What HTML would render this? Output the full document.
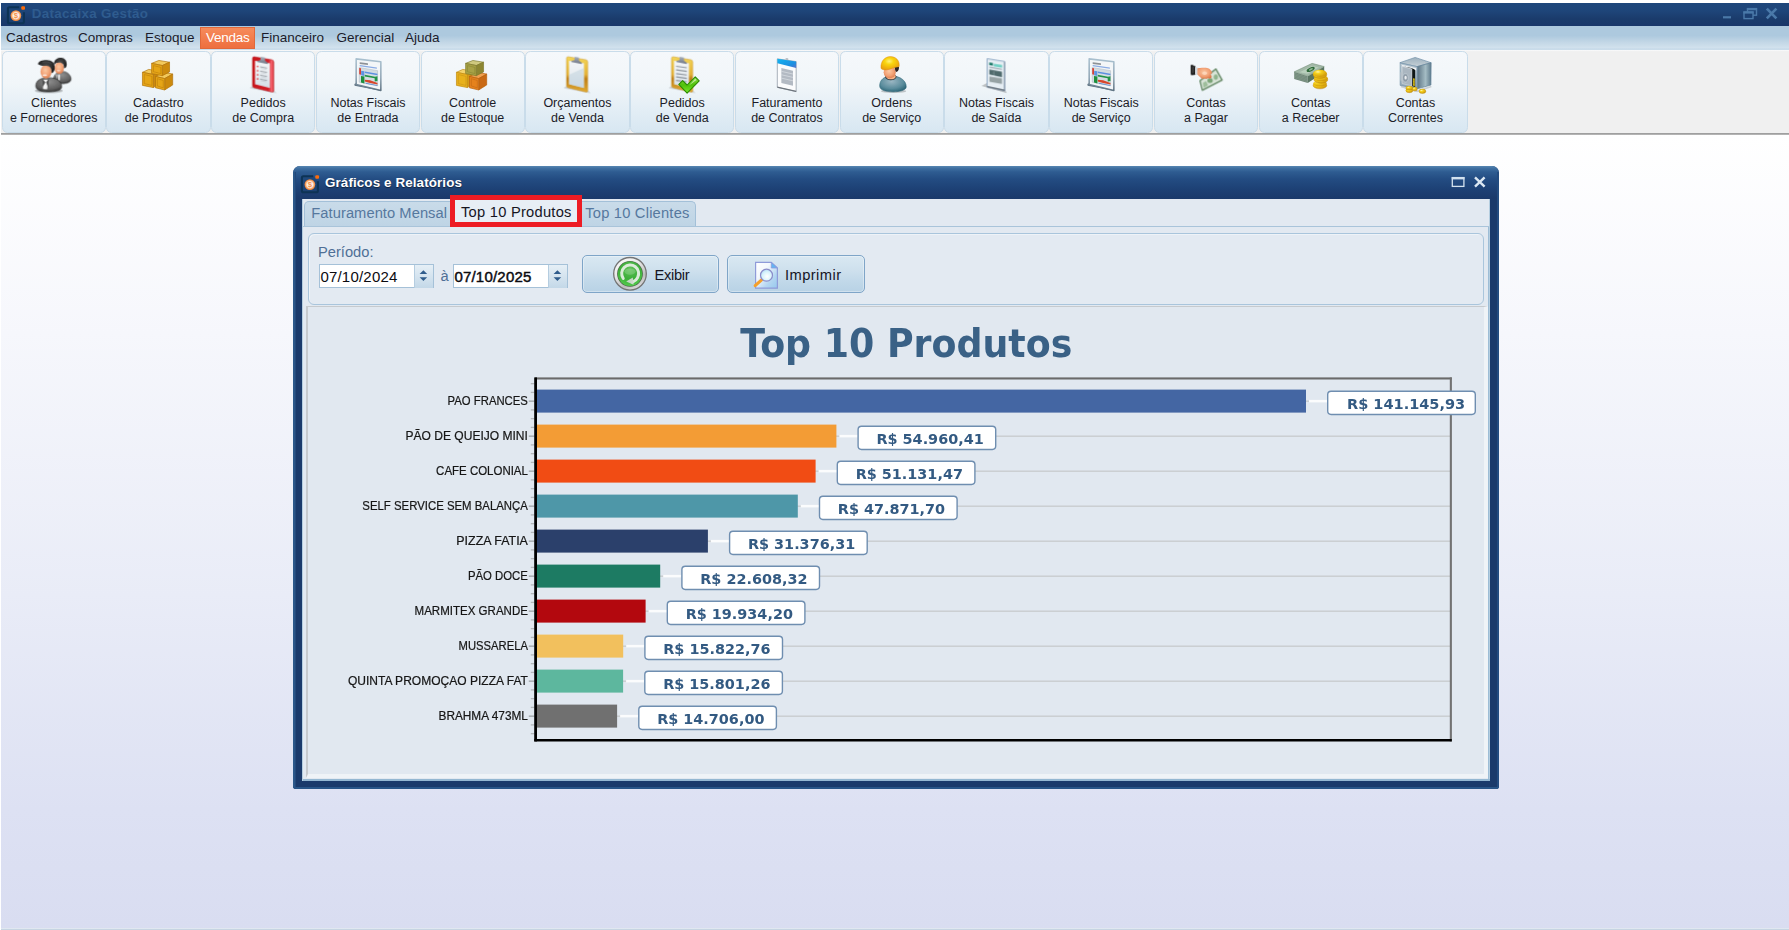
<!DOCTYPE html>
<html lang="pt-BR">
<head>
<meta charset="utf-8">
<title>Datacaixa Gestão</title>
<style>
*{box-sizing:border-box;margin:0;padding:0}
html,body{width:1789px;height:930px;overflow:hidden;background:#fff}
body{position:relative;font-family:"Liberation Sans",sans-serif;color:#1e1e1e}
.abs,.abs2 *{position:absolute}
.abs{position:absolute}
#desk{left:1px;top:135px;width:1788px;height:793px;background:linear-gradient(#ffffff 0%,#f6f7fc 25%,#e9ecf7 58%,#dde1f3 85%,#d9ddf1 100%)}
#deskline{left:1px;top:928px;width:1788px;height:2px;background:linear-gradient(#eef1f8,#b9cbdb)}
#title{left:1px;top:3px;width:1788px;height:23px;background:linear-gradient(#1f477b 0%,#1e4579 35%,#1a3b6b 70%,#19376A 100%)}
#title .cap{left:30.7px;top:3px;font-weight:bold;font-size:13.4px;letter-spacing:.3px;color:#2f5c8f;white-space:nowrap}
#menu{left:1px;top:26px;width:1788px;height:24px;background:linear-gradient(#adc9de 0%,#adc9de 40%,#c3d7e6 68%,#d1e1ed 90%,#c5d9e8 97%,#d4e3ee 100%)}
#menu span{position:absolute;top:4px;font-size:13.5px;color:#1b1b2a;white-space:nowrap}
#menu .v{letter-spacing:-.25px}
#menu .sel{position:absolute;left:199px;top:1px;width:55px;height:22px;background:linear-gradient(#f68b5b,#ee6f3f);border:1px solid #e0683a}
#tool{left:1px;top:50px;width:1788px;height:83px;background:linear-gradient(#fafbfc 0,#f0f0f0 1.6px)}
#toolline{left:1px;top:132.8px;width:1788px;height:2.4px;background:linear-gradient(#a6a6a6 0%,#9c9c9c 35%,#c2c2c2 100%)}
.tb{position:absolute;top:1px;height:82px;width:104.4px;border:1.5px solid #c9dcea;border-radius:5.5px;background:linear-gradient(#f5f8fb 0%,#f1f6f9 40%,#e2edf5 75%,#d8e7f2 100%)}
.tb .lb{position:absolute;left:0;right:0;top:43.6px;text-align:center;font-size:12.5px;line-height:15.4px;color:#1c1c28;white-space:nowrap}
.ic{position:absolute;top:52px;width:50px;height:45px;overflow:visible}
#win{left:293px;top:166px;width:1205.6px;height:623px;border-radius:7px 7px 3px 3px;background:#1a3a6b;overflow:hidden}
#wtitle{left:0;top:0;width:1206px;height:33px;background:linear-gradient(#5787b2 0%,#3f6fa1 7%,#2e5c91 18%,#234c82 40%,#1d4074 72%,#1a396a 100%)}
#wtitle .cap{left:32px;top:8.5px;font-weight:bold;font-size:13.4px;letter-spacing:.11px;color:#fff;white-space:nowrap;text-shadow:0 1px 1px rgba(0,0,0,.5)}
#wedge{left:0;top:6px;width:3.2px;height:617px;background:linear-gradient(90deg,#2c598b 0%,#2a5587 70%,#1a3a6b 100%)}
#wedgeb{left:0;bottom:0;width:1206px;height:2.5px;background:#285588}
#wedger{right:0;top:6px;width:2px;height:617px;background:#234c80}
#client{left:8.8px;top:33px;width:1188.4px;height:582.2px;background:#e2e9f1;border:1px solid #b5cee0;border-top:none}
.t14{font-size:14.1px;white-space:nowrap}
</style>
</head>
<body>

<svg width="0" height="0" style="position:absolute"><defs>
<filter id="bl" x="-10%" y="-10%" width="120%" height="120%"><feGaussianBlur stdDeviation="7"/></filter>
<filter id="bl2" x="-20%" y="-20%" width="140%" height="140%"><feGaussianBlur stdDeviation="14"/></filter>
<radialGradient id="skin" cx="45%" cy="40%" r="65%"><stop offset="0" stop-color="#fbc9a4"/><stop offset="0.6" stop-color="#f2a074"/><stop offset="1" stop-color="#d9794a"/></radialGradient>
<radialGradient id="suit" cx="50%" cy="30%" r="75%"><stop offset="0" stop-color="#8f8f8f"/><stop offset="0.7" stop-color="#5e5e5e"/><stop offset="1" stop-color="#2c2c2c"/></radialGradient>
<radialGradient id="hair" cx="50%" cy="40%" r="70%"><stop offset="0" stop-color="#4a4a4a"/><stop offset="1" stop-color="#121212"/></radialGradient>
<linearGradient id="gold1" x1="0" y1="0" x2="1" y2="1"><stop offset="0" stop-color="#e2a516"/><stop offset="0.6" stop-color="#efbb3c"/><stop offset="1" stop-color="#e0a010"/></linearGradient>
<linearGradient id="redb" x1="0" y1="0" x2="1" y2="0"><stop offset="0" stop-color="#c8161c"/><stop offset="0.75" stop-color="#d42029"/><stop offset="0.92" stop-color="#f76872"/><stop offset="1" stop-color="#c8161c"/></linearGradient>
<linearGradient id="yelb" x1="0" y1="0" x2="0" y2="1"><stop offset="0" stop-color="#f3d558"/><stop offset="0.5" stop-color="#e5b43a"/><stop offset="0.62" stop-color="#bf7f18"/><stop offset="1" stop-color="#e0aa32"/></linearGradient>
<linearGradient id="paper" x1="0" y1="0" x2="0" y2="1"><stop offset="0" stop-color="#f4f6f8"/><stop offset="0.5" stop-color="#e9eef2"/><stop offset="1" stop-color="#d3dfe7"/></linearGradient>
<linearGradient id="clip" x1="0" y1="0" x2="0" y2="1"><stop offset="0" stop-color="#a9b0bb"/><stop offset="1" stop-color="#6d7483"/></linearGradient>
<linearGradient id="chk" x1="0" y1="0" x2="0" y2="1"><stop offset="0" stop-color="#8fe04a"/><stop offset="0.5" stop-color="#4fc108"/><stop offset="1" stop-color="#7cea30"/></linearGradient>
<radialGradient id="helm" cx="45%" cy="35%" r="70%"><stop offset="0" stop-color="#fff27a"/><stop offset="0.35" stop-color="#f9d40c"/><stop offset="1" stop-color="#e89a0c"/></radialGradient>
<radialGradient id="teal" cx="45%" cy="35%" r="75%"><stop offset="0" stop-color="#9ab6c2"/><stop offset="0.6" stop-color="#5a8c9c"/><stop offset="1" stop-color="#1f5a6c"/></radialGradient>
<linearGradient id="bluetop" x1="0" y1="0" x2="1" y2="1"><stop offset="0" stop-color="#10b4f0"/><stop offset="0.7" stop-color="#1e8ee0"/><stop offset="1" stop-color="#5b6fc8"/></linearGradient>
<radialGradient id="coin" cx="35%" cy="30%" r="80%"><stop offset="0" stop-color="#fff6a8"/><stop offset="0.3" stop-color="#f6d21c"/><stop offset="1" stop-color="#c98f08"/></radialGradient>
<linearGradient id="sfr" x1="0" y1="0" x2="1" y2="0"><stop offset="0" stop-color="#5d7484"/><stop offset="0.6" stop-color="#a4bcc4"/><stop offset="1" stop-color="#5f7b8c"/></linearGradient>
<linearGradient id="sff" x1="0" y1="0" x2="0" y2="1"><stop offset="0" stop-color="#c4d0d8"/><stop offset="1" stop-color="#8ca2b2"/></linearGradient>
<linearGradient id="sft" x1="0" y1="0" x2="0" y2="1"><stop offset="0" stop-color="#9cb0be"/><stop offset="1" stop-color="#c6d0d6"/></linearGradient>
<linearGradient id="frm" x1="0" y1="0" x2="0" y2="1"><stop offset="0" stop-color="#a9c0cf"/><stop offset="0.6" stop-color="#8fa4b4"/><stop offset="1" stop-color="#5f7382"/></linearGradient>
</defs></svg>

<div id="desk" class="abs"></div><div id="deskline" class="abs"></div>
<div id="title" class="abs"><div class="cap abs">Datacaixa Gestão</div><svg class="abs" style="left:4.9px;top:1.6px" width="20" height="20" viewBox="0 0 20 20"><defs><radialGradient id="cn" cx="50%" cy="50%" r="50%"><stop offset="0" stop-color="#fff"/><stop offset=".55" stop-color="#fdeee2"/><stop offset=".8" stop-color="#f5a263"/><stop offset="1" stop-color="#ee7f30"/></radialGradient></defs><path d="M13.2,2.2 L3.4,2.2 Q1.9,2.2 1.9,3.7 L1.9,16.8 Q1.9,18.3 3.4,18.3 L16.4,18.3 Q17.9,18.3 17.9,16.8 L17.9,7.2" fill="#1d4674" fill-opacity=".55" stroke="#0d3355" stroke-width="2.1"/><circle cx="9.9" cy="10.6" r="5.35" fill="url(#cn)"/><text x="9.9" y="13.2" font-family="Liberation Sans,sans-serif" font-size="7.6" font-weight="bold" fill="#f4914a" text-anchor="middle">$</text><rect x="15.3" y="1.2" width="3.7" height="3.5" rx="1" fill="#fb6c0c"/></svg>
<svg class="abs" style="left:1715px;top:2px" width="70" height="20" viewBox="0 0 70 20"><rect x="7" y="11.2" width="8" height="2.2" fill="#4a79a9"/><rect x="31.5" y="3.6" width="9" height="6.6" fill="none" stroke="#4a79a9" stroke-width="1.4"/><rect x="30.9" y="3" width="10.2" height="2.2" fill="#4a79a9"/><rect x="28" y="7" width="9" height="6.6" fill="#1b3f72" stroke="#4a79a9" stroke-width="1.4"/><rect x="27.4" y="6.4" width="10.2" height="2.2" fill="#4a79a9"/><path d="M50.8,3.6 L60.4,13.4 M60.4,3.6 L50.8,13.4" stroke="#4a79a9" stroke-width="2.7"/></svg>
</div>
<div id="menu" class="abs"><div class="sel"></div><span style="left:5px">Cadastros</span><span style="left:77px">Compras</span><span style="left:144px">Estoque</span><span class="v" style="left:205px;color:#fff">Vendas</span><span style="left:260px">Financeiro</span><span style="left:335.5px">Gerencial</span><span style="left:404px">Ajuda</span></div>
<div id="tool" class="abs">
<div class="tb" style="left:0.50px"><div class="lb">Clientes<br>e Fornecedores</div></div>
<div class="tb" style="left:105.25px"><div class="lb">Cadastro<br>de Produtos</div></div>
<div class="tb" style="left:210.00px"><div class="lb">Pedidos<br>de Compra</div></div>
<div class="tb" style="left:314.75px"><div class="lb">Notas Fiscais<br>de Entrada</div></div>
<div class="tb" style="left:419.50px"><div class="lb">Controle<br>de Estoque</div></div>
<div class="tb" style="left:524.25px"><div class="lb">Orçamentos<br>de Venda</div></div>
<div class="tb" style="left:629.00px"><div class="lb">Pedidos<br>de Venda</div></div>
<div class="tb" style="left:733.75px"><div class="lb">Faturamento<br>de Contratos</div></div>
<div class="tb" style="left:838.50px"><div class="lb">Ordens<br>de Serviço</div></div>
<div class="tb" style="left:943.25px"><div class="lb">Notas Fiscais<br>de Saída</div></div>
<div class="tb" style="left:1048.00px"><div class="lb">Notas Fiscais<br>de Serviço</div></div>
<div class="tb" style="left:1152.75px"><div class="lb">Contas<br>a Pagar</div></div>
<div class="tb" style="left:1257.50px"><div class="lb">Contas<br>a Receber</div></div>
<div class="tb" style="left:1362.25px"><div class="lb">Contas<br>Correntes</div></div>
</div><div id="toolline" class="abs"></div>
<svg class="ic" style="left:28px" viewBox="0 0 1033 930"><g filter="url(#bl)">
<ellipse cx="430" cy="800" rx="290" ry="48" fill="#000" opacity="0.28" filter="url(#bl2)"/>
<path d="M520,600 C520,470 610,400 700,400 C800,400 890,470 890,560 C890,625 800,655 700,655 C600,655 520,640 520,600Z" fill="url(#suit)" stroke="#2a2a2a" stroke-width="10"/>
<path d="M620,470 L665,470 L655,590 L625,585Z" fill="#e8e8e8"/>
<path d="M560,450 L625,470 L600,560Z" fill="#bdbdbd" opacity=".8"/>
<ellipse cx="645" cy="330" rx="95" ry="122" fill="url(#skin)"/>
<ellipse cx="630" cy="385" rx="40" ry="16" fill="#fff" opacity=".55"/>
<path d="M535,250 C535,150 620,115 690,120 C770,125 815,200 795,290 C785,325 760,335 745,335 C745,260 720,215 640,215 C590,215 555,230 545,270Z" fill="url(#hair)"/>
<path d="M160,700 C160,590 250,530 420,530 C590,530 695,600 695,720 C695,795 560,820 420,820 C270,820 160,795 160,700Z" fill="url(#suit)" stroke="#222" stroke-width="12"/>
<path d="M305,575 L415,575 L395,770 L312,765Z" fill="#f6f6f6"/>
<path d="M295,555 L360,625 L305,720Z M430,555 L372,625 L415,730Z" fill="#2c2c2c" opacity="0.8"/>
<ellipse cx="372" cy="405" rx="115" ry="142" fill="url(#skin)"/>
<ellipse cx="345" cy="478" rx="48" ry="18" fill="#fff" opacity="0.75"/>
<path d="M205,245 C230,175 330,160 420,170 C525,180 565,260 550,355 C540,405 505,425 488,435 C490,340 460,290 380,285 C310,280 260,290 245,270 C225,265 210,260 205,245Z" fill="url(#hair)"/>
<path d="M300,215 C360,195 430,200 480,240" stroke="#6a6a6a" stroke-width="14" fill="none" opacity=".6"/>
</g></svg>
<svg class="ic" style="left:133px" viewBox="0 0 1033 930"><g filter="url(#bl)"><path d="M195,420 L325,360 L550,396.0 L420,465 Z" fill="#f2c95c" stroke="#b07208" stroke-width="14" stroke-linejoin="round"/><path d="M420,465 L550,396.0 L550,656.0 L420,735 Z" fill="#cc8a10" stroke="#b07208" stroke-width="14" stroke-linejoin="round"/><path d="M195,420 L420,465 L420,735 L195,690 Z" fill="#e5a516" stroke="#b07208" stroke-width="14" stroke-linejoin="round"/><path d="M233,466 L390,503 L390,691 L233,652 Z" fill="none" stroke="#b07208" stroke-opacity="0.7" stroke-width="13"/><path d="M465,505 L630,420 L820,456.0 L655,550 Z" fill="#f2c95c" stroke="#b07208" stroke-width="14" stroke-linejoin="round"/><path d="M655,550 L820,456.0 L820,681.0 L655,785 Z" fill="#cc8a10" stroke="#b07208" stroke-width="14" stroke-linejoin="round"/><path d="M465,505 L655,550 L655,785 L465,740 Z" fill="#e5a516" stroke="#b07208" stroke-width="14" stroke-linejoin="round"/><path d="M503,551 L625,588 L625,741 L503,702 Z" fill="none" stroke="#b07208" stroke-opacity="0.7" stroke-width="13"/><path d="M385,235 L535,175 L755,211.0 L605,280 Z" fill="#f2c95c" stroke="#b07208" stroke-width="14" stroke-linejoin="round"/><path d="M605,280 L755,211.0 L755,411.0 L605,490 Z" fill="#cc8a10" stroke="#b07208" stroke-width="14" stroke-linejoin="round"/><path d="M385,235 L605,280 L605,490 L385,445 Z" fill="#e5a516" stroke="#b07208" stroke-width="14" stroke-linejoin="round"/><path d="M423,281 L575,318 L575,446 L423,407 Z" fill="none" stroke="#b07208" stroke-opacity="0.7" stroke-width="13"/></g></svg>
<svg class="ic" style="left:238px" viewBox="0 0 1033 930"><g filter="url(#bl)">
<path d="M240,750 L300,700 L740,800 L800,850 Z" fill="#000" opacity="0.16" filter="url(#bl2)"/>
<path d="M300,130 Q300,95 335,98 L700,160 Q738,168 738,205 L738,800 Q738,835 700,828 L335,738 Q300,730 300,695 Z" fill="url(#redb)" stroke="#b20f14" stroke-width="10"/>
<path d="M352,180 L660,232 L660,745 L352,665 Z" fill="url(#paper)"/>
<circle cx="405" cy="300" r="17" fill="#e02a30"/><path d="M455,305 L600,332" stroke="#8a8f96" stroke-width="20" opacity="0.8"/><path d="M470,338 L590,360" stroke="#b4b9c0" stroke-width="14" opacity="0.7"/><circle cx="405" cy="388" r="17" fill="#e02a30"/><path d="M455,393 L600,420" stroke="#8a8f96" stroke-width="20" opacity="0.8"/><path d="M470,426 L590,448" stroke="#b4b9c0" stroke-width="14" opacity="0.7"/><circle cx="405" cy="472" r="17" fill="#e02a30"/><path d="M455,477 L600,504" stroke="#8a8f96" stroke-width="20" opacity="0.8"/><path d="M470,510 L590,532" stroke="#b4b9c0" stroke-width="14" opacity="0.7"/><circle cx="405" cy="555" r="17" fill="#e02a30"/><path d="M455,560 L600,587" stroke="#8a8f96" stroke-width="20" opacity="0.8"/><path d="M470,593 L590,615" stroke="#b4b9c0" stroke-width="14" opacity="0.7"/>
<path d="M470,100 L555,112 L560,180 L620,225 L615,245 L400,205 L400,185 L465,165 Z" fill="url(#clip)"/>
</g></svg>
<svg class="ic" style="left:343px" viewBox="0 0 1033 930"><g filter="url(#bl)">
<path d="M235,660 L275,640 L780,760 L780,800 L240,700 Z" fill="#5f7382"/>
<path d="M272,142 L782,202 L782,795 L272,672 Z" fill="#f3f6f8" stroke="url(#frm)" stroke-width="32" stroke-linejoin="round"/>
<path d="M345,212 L515,232 L515,268 L345,246Z" fill="#8d9196"/>
<path d="M345,268 L700,318 L700,348 L345,292Z" fill="#6f98e0" opacity="0.8"/>
<path d="M335,320 L715,385 L715,700 L335,625Z" fill="#d3dce2" stroke="#9aa6b0" stroke-width="8"/>
<path d="M335,330 L372,336 L372,470 L335,462Z" fill="#d64236"/>
<path d="M375,385 L440,397 L440,495 L375,482Z" fill="#5b94e0"/>
<path d="M372,495 L442,508 L442,650 L372,632Z" fill="#1d8f3c"/>
<path d="M450,405 L712,452 L712,480 L450,432Z" fill="#5b8fe0"/>
<path d="M450,470 L660,510 L712,500 L712,600 L655,610 L655,545 L450,505Z" fill="#219446"/>
<path d="M450,575 L560,585 L712,640 L712,672 L560,640 L450,610Z" fill="#d8452a"/>
<path d="M470,635 L712,685 L712,705 L470,655Z" fill="#6a90cf"/>
</g></svg>
<svg class="ic" style="left:447px" viewBox="0 0 1033 930"><g filter="url(#bl)"><path d="M195,420 L325,360 L550,396.0 L420,465 Z" fill="#f3d26a" stroke="#c08a10" stroke-width="14" stroke-linejoin="round"/><path d="M420,465 L550,396.0 L550,656.0 L420,735 Z" fill="#d59a14" stroke="#c08a10" stroke-width="14" stroke-linejoin="round"/><path d="M195,420 L420,465 L420,735 L195,690 Z" fill="#e8b11f" stroke="#c08a10" stroke-width="14" stroke-linejoin="round"/><path d="M233,466 L390,503 L390,691 L233,652 Z" fill="none" stroke="#c08a10" stroke-opacity="0.7" stroke-width="13"/><path d="M465,505 L630,420 L820,456.0 L655,550 Z" fill="#f0a050" stroke="#b86010" stroke-width="14" stroke-linejoin="round"/><path d="M655,550 L820,456.0 L820,681.0 L655,785 Z" fill="#c96a12" stroke="#b86010" stroke-width="14" stroke-linejoin="round"/><path d="M465,505 L655,550 L655,785 L465,740 Z" fill="#e5821e" stroke="#b86010" stroke-width="14" stroke-linejoin="round"/><path d="M503,551 L625,588 L625,741 L503,702 Z" fill="none" stroke="#b86010" stroke-opacity="0.7" stroke-width="13"/><path d="M385,235 L535,175 L755,211.0 L605,280 Z" fill="#cfc97e" stroke="#7e7a2c" stroke-width="14" stroke-linejoin="round"/><path d="M605,280 L755,211.0 L755,411.0 L605,490 Z" fill="#8c8632" stroke="#7e7a2c" stroke-width="14" stroke-linejoin="round"/><path d="M385,235 L605,280 L605,490 L385,445 Z" fill="#a8a246" stroke="#7e7a2c" stroke-width="14" stroke-linejoin="round"/><path d="M423,281 L575,318 L575,446 L423,407 Z" fill="none" stroke="#7e7a2c" stroke-opacity="0.7" stroke-width="13"/></g></svg>
<svg class="ic" style="left:552px" viewBox="0 0 1033 930"><g filter="url(#bl)">
<path d="M240,750 L300,700 L740,800 L800,850 Z" fill="#000" opacity="0.16" filter="url(#bl2)"/>
<path d="M300,130 Q300,95 335,98 L700,160 Q738,168 738,205 L738,800 Q738,835 700,828 L335,738 Q300,730 300,695 Z" fill="url(#yelb)" stroke="#c8922a" stroke-width="10"/>
<path d="M352,180 L660,232 L660,745 L352,665 Z" fill="url(#paper)"/>
<path d="M352,470 L660,330 L660,745 L352,665Z" fill="#c5d6e0" opacity="0.6"/>
<path d="M470,100 L555,112 L560,180 L620,225 L615,245 L400,205 L400,185 L465,165 Z" fill="url(#clip)"/>
</g></svg>
<svg class="ic" style="left:657px" viewBox="0 0 1033 930"><g filter="url(#bl)">
<path d="M240,750 L300,700 L740,800 L800,850 Z" fill="#000" opacity="0.16" filter="url(#bl2)"/>
<path d="M300,130 Q300,95 335,98 L700,160 Q738,168 738,205 L738,800 Q738,835 700,828 L335,738 Q300,730 300,695 Z" fill="url(#yelb)" stroke="#c8922a" stroke-width="10"/>
<path d="M352,180 L660,232 L660,745 L352,665 Z" fill="url(#paper)"/>
<path d="M395,295 L615,325" stroke="#7d858e" stroke-width="24" opacity="0.85"/><path d="M395,370 L615,400" stroke="#7d858e" stroke-width="24" opacity="0.85"/><path d="M395,445 L615,475" stroke="#7d858e" stroke-width="24" opacity="0.85"/><path d="M395,515 L615,545" stroke="#7d858e" stroke-width="24" opacity="0.85"/><path d="M395,585 L615,615" stroke="#7d858e" stroke-width="24" opacity="0.85"/>
<path d="M470,100 L555,112 L560,180 L620,225 L615,245 L400,205 L400,185 L465,165 Z" fill="url(#clip)"/>
</g><g filter="url(#bl)"><path d="M450,668 L530,590 L622,682 L790,512 L872,598 L622,852 Z" fill="url(#chk)" stroke="#2c8a06" stroke-width="22" stroke-linejoin="round"/><path d="M660,690 L790,555 L815,580 Z" fill="#fff" opacity="0.55"/></g></svg>
<svg class="ic" style="left:762px" viewBox="0 0 1033 930"><g filter="url(#bl)">
<path d="M316,142 L706,198 L706,818 L316,730 Z" fill="#fbfcfd" stroke="#9aa3ad" stroke-width="18" stroke-linejoin="round"/>
<path d="M316,715 L706,800 L706,825 L316,740Z" fill="#6d747c"/>
<path d="M490,125 L540,130 L545,170 L485,160Z" fill="#b9bec4"/>
<path d="M318,140 L706,196 L706,330 L318,235 Z" fill="url(#bluetop)"/>
<path d="M400,330 L640,385 L640,700 L400,640Z" fill="#a6aeb8" opacity="0.85"/>
<path d="M400,400 L640,455 M400,470 L640,525 M400,540 L640,595" stroke="#e8ecef" stroke-width="16" opacity="0.7"/>
</g></svg>
<svg class="ic" style="left:866px" viewBox="0 0 1033 930"><g filter="url(#bl)">
<ellipse cx="570" cy="810" rx="260" ry="35" fill="#000" opacity="0.2"/>
<path d="M282,700 C282,570 380,500 520,495 C700,490 832,590 832,720 C832,790 700,822 560,822 C400,822 282,790 282,700Z" fill="url(#teal)" stroke="#1f5a6c" stroke-width="10"/>
<path d="M395,520 C420,600 600,610 635,510 L610,480 L400,490Z" fill="#3a3f44"/>
<path d="M420,520 C450,580 590,585 615,510 L590,450 L420,460Z" fill="#f6b185"/>
<ellipse cx="490" cy="420" rx="125" ry="125" fill="url(#skin)"/>
<path d="M585,310 L680,300 C690,360 660,410 620,415 C600,380 600,340 585,310Z" fill="#2a2320"/>
<path d="M310,330 C300,200 380,98 500,95 C620,92 700,180 685,300 C640,315 590,320 545,335 C470,370 370,385 320,350Z" fill="url(#helm)" stroke="#e08e10" stroke-width="10"/>
</g></svg>
<svg class="ic" style="left:971px" viewBox="0 0 1033 930"><g filter="url(#bl)">
<path d="M215,700 L330,640 L700,780 L740,850 Z" fill="#000" opacity="0.22" filter="url(#bl2)"/>
<path d="M332,138 L696,196 L696,800 L332,722 Z" fill="#e6eef4" stroke="#8fa8c4" stroke-width="20" stroke-linejoin="round"/>
<path d="M332,700 L696,778 L696,806 L332,728Z" fill="#56606a"/>
<path d="M684,200 L700,200 L700,800 L684,796Z" fill="#6f7f8e"/>
<path d="M375,215 L452,228 L452,285 L375,270Z" fill="#1f7a6a"/>
<path d="M470,240 L642,268 L642,325 L470,296Z" fill="#6fd0c4"/>
<path d="M378,305 L640,350 L640,370 L378,325Z" fill="#9aa4ac"/>
<path d="M378,360 L640,408 L640,522 L378,462Z" fill="#4f6a6c"/>
<path d="M470,400 L470,500" stroke="#dfe8ea" stroke-width="12" opacity="0.5"/>
<path d="M380,505 L640,548 L640,662 L380,612Z" fill="#96a2a4"/>
</g></svg>
<svg class="ic" style="left:1076px" viewBox="0 0 1033 930"><g filter="url(#bl)">
<path d="M235,660 L275,640 L780,760 L780,800 L240,700 Z" fill="#5f7382"/>
<path d="M272,142 L782,202 L782,795 L272,672 Z" fill="#f3f6f8" stroke="url(#frm)" stroke-width="32" stroke-linejoin="round"/>
<path d="M345,212 L515,232 L515,268 L345,246Z" fill="#8d9196"/>
<path d="M345,268 L700,318 L700,348 L345,292Z" fill="#6f98e0" opacity="0.8"/>
<path d="M335,320 L715,385 L715,700 L335,625Z" fill="#d3dce2" stroke="#9aa6b0" stroke-width="8"/>
<path d="M335,330 L372,336 L372,470 L335,462Z" fill="#d64236"/>
<path d="M375,385 L440,397 L440,495 L375,482Z" fill="#5b94e0"/>
<path d="M372,495 L442,508 L442,650 L372,632Z" fill="#1d8f3c"/>
<path d="M450,405 L712,452 L712,480 L450,432Z" fill="#5b8fe0"/>
<path d="M450,470 L660,510 L712,500 L712,600 L655,610 L655,545 L450,505Z" fill="#219446"/>
<path d="M450,575 L560,585 L712,640 L712,672 L560,640 L450,610Z" fill="#d8452a"/>
<path d="M470,635 L712,685 L712,705 L470,655Z" fill="#6a90cf"/>
</g></svg>
<svg class="ic" style="left:1181px" viewBox="0 0 1033 930"><g filter="url(#bl)">
<path d="M392,592 L722,352 L850,580 L440,790 Z" fill="#d9e4d8" stroke="#5f8460" stroke-width="26" stroke-linejoin="round"/>
<ellipse cx="720" cy="520" rx="45" ry="55" fill="#8fb48c"/>
<ellipse cx="600" cy="590" rx="55" ry="50" fill="#6f9c6c" opacity="0.9"/>
<path d="M450,640 L520,600 L560,690 L470,740Z" fill="#8fb48c" opacity="0.8"/>
<path d="M200,280 Q205,255 240,268 L300,300 L300,470 L215,478 Q198,470 200,440Z" fill="#1a1a1a"/>
<path d="M232,290 L262,300 L258,440 L228,440Z" fill="#555" opacity="0.8"/>
<path d="M292,310 L345,325 L345,468 L292,472Z" fill="#d4d9df"/>
<path d="M340,340 C400,325 500,325 560,335 C600,350 640,400 640,430 C640,450 620,455 610,460 C640,490 640,540 610,548 C590,555 570,545 560,535 C540,555 500,560 480,540 C460,560 420,555 410,530 C380,500 345,480 340,460Z" fill="url(#skin)"/>
<ellipse cx="490" cy="440" rx="50" ry="35" fill="#ffe0c8" opacity="0.7"/>
</g></svg>
<svg class="ic" style="left:1285px" viewBox="0 0 1033 930"><g filter="url(#bl)">
<path d="M190,410 L470,500 L470,640 L190,560 Z" fill="#71877a"/>
<path d="M470,500 L810,300 L810,420 L470,640 Z" fill="#5a7462"/>
<path d="M190,440 L470,530 M190,470 L470,560 M190,500 L470,590 M190,530 L470,620" stroke="#9db8a0" stroke-width="8" opacity="0.7"/>
<path d="M190,410 L560,235 L810,300 L470,500 Z" fill="#a3b9a8" stroke="#6f8a74" stroke-width="10"/>
<path d="M300,420 L560,290 L700,320 L460,450Z" fill="#c2d8c4" opacity="0.7"/>
<ellipse cx="530" cy="360" rx="90" ry="40" fill="#2f6a3a" transform="rotate(-25 530 360)"/>
<ellipse cx="535" cy="362" rx="45" ry="18" fill="#8fb892" transform="rotate(-25 530 360)"/>
<ellipse cx="722" cy="690" rx="142" ry="72" fill="url(#coin)" stroke="#b87f08" stroke-width="8"/>
<ellipse cx="722" cy="650" rx="142" ry="60" fill="url(#coin)"/>
<ellipse cx="742" cy="575" rx="142" ry="72" fill="url(#coin)" stroke="#b87f08" stroke-width="8"/>
<ellipse cx="742" cy="540" rx="142" ry="60" fill="url(#coin)"/>
<ellipse cx="722" cy="470" rx="142" ry="78" fill="url(#coin)" stroke="#c08a08" stroke-width="8"/>
<ellipse cx="722" cy="440" rx="140" ry="75" fill="url(#coin)"/>
</g></svg>
<svg class="ic" style="left:1390px" viewBox="0 0 1033 930"><g filter="url(#bl)">
<path d="M230,700 L560,790 L850,700 L860,730 L560,830 L220,730Z" fill="#000" opacity="0.15" filter="url(#bl2)"/>
<path d="M202,222 L520,112 L850,222 L560,302 Z" fill="url(#sft)" stroke="#6f8ea6" stroke-width="14" stroke-linejoin="round"/>
<path d="M562,302 L850,222 L846,682 L562,762 Z" fill="url(#sfr)" stroke="#5f7f96" stroke-width="14" stroke-linejoin="round"/>
<path d="M210,230 L560,302 L560,762 L210,690 Z" fill="url(#sff)" stroke="#6f8ea6" stroke-width="14" stroke-linejoin="round"/>
<path d="M250,270 L540,335 L540,380 L250,300Z" fill="#f4f6f8"/>
<path d="M270,292 Q480,330 520,370 L520,722 L452,705 L452,350 Z" fill="#0b1412"/>
<path d="M250,296 L452,352 L452,704 L250,652 Z" fill="#aab6c0" stroke="#dfe6ea" stroke-width="10"/>
<ellipse cx="318" cy="535" rx="58" ry="85" fill="#8d9aa6" stroke="#cfd8de" stroke-width="12"/>
<ellipse cx="322" cy="530" rx="24" ry="40" fill="#e8ecef"/>
<path d="M215,420 L250,420 L250,600 L215,590Z" fill="#b8c2ca"/>
<path d="M478,545 L510,550 L510,705 L478,695Z" fill="#e8c91a"/>
<path d="M478,590 L510,595 M478,640 L510,645" stroke="#7a6a08" stroke-width="8"/>
<ellipse cx="400" cy="795" rx="72" ry="45" fill="url(#coin)" stroke="#b88a08" stroke-width="8"/>
<ellipse cx="400" cy="745" rx="72" ry="42" fill="url(#coin)" stroke="#b88a08" stroke-width="8"/>
<ellipse cx="512" cy="765" rx="52" ry="42" fill="url(#coin)" stroke="#b88a08" stroke-width="8"/>
<ellipse cx="670" cy="812" rx="70" ry="46" fill="url(#coin)" stroke="#b88a08" stroke-width="8"/>
</g></svg>
<div id="win" class="abs"><div id="wtitle" class="abs"><div class="cap abs">Gráficos e Relatórios</div><svg class="abs" style="left:7px;top:7.5px" width="20" height="20" viewBox="0 0 20 20"><defs><radialGradient id="cn" cx="50%" cy="50%" r="50%"><stop offset="0" stop-color="#fff"/><stop offset=".55" stop-color="#fdeee2"/><stop offset=".8" stop-color="#f5a263"/><stop offset="1" stop-color="#ee7f30"/></radialGradient></defs><path d="M13.2,2.2 L3.4,2.2 Q1.9,2.2 1.9,3.7 L1.9,16.8 Q1.9,18.3 3.4,18.3 L16.4,18.3 Q17.9,18.3 17.9,16.8 L17.9,7.2" fill="#1d4674" fill-opacity=".55" stroke="#0d3355" stroke-width="2.1"/><circle cx="9.9" cy="10.6" r="5.35" fill="url(#cn)"/><text x="9.9" y="13.2" font-family="Liberation Sans,sans-serif" font-size="7.6" font-weight="bold" fill="#f4914a" text-anchor="middle">$</text><rect x="15.3" y="1.2" width="3.7" height="3.5" rx="1" fill="#fb6c0c"/></svg>
<svg class="abs" style="left:1150px;top:5px" width="50" height="22" viewBox="0 0 50 22"><rect x="9.3" y="6.6" width="11.6" height="8.8" fill="none" stroke="#d3e2ef" stroke-width="1.3"/><rect x="8.7" y="6" width="12.8" height="2.4" fill="#d3e2ef"/><path d="M32,6.3 L41.6,15.7 M41.6,6.3 L32,15.7" stroke="#dbe7f2" stroke-width="2.4"/></svg>
</div><div id="wedge" class="abs"></div><div id="wedger" class="abs"></div><div id="wedgeb" class="abs"></div><div id="client" class="abs"></div></div>
<div class="abs" style="left:304px;top:201px;width:147px;height:26px;background:linear-gradient(#c9dbe9,#bed4e5);border:1px solid #a3c0d8;border-bottom:none;border-radius:5px 0 0 0"></div>
<div class="abs" style="left:582px;top:201px;width:113.5px;height:26px;background:linear-gradient(#c9dbe9,#bed4e5);border:1px solid #a3c0d8;border-bottom:none;border-left:none;border-radius:0 5px 0 0"></div>
<div class="abs" style="left:302.8px;top:226.4px;width:1186.6px;height:1px;background:#a9c4da"></div>
<div class="abs" style="left:452px;top:200px;width:129px;height:27px;background:#e7eef5;border-radius:4px 4px 0 0"></div>
<div class="abs" style="left:450px;top:195px;width:132px;height:32px;border:5px solid #ed1c24"></div>
<div class="abs" style="left:311.3px;top:206.26px;font-size:14.7px;line-height:14.7px;color:#56789e;white-space:nowrap;letter-spacing:.06px">Faturamento Mensal</div>
<div class="abs" style="left:461px;top:205.26px;font-size:14.7px;line-height:14.7px;color:#15151f;white-space:nowrap;letter-spacing:.25px">Top 10 Produtos</div>
<div class="abs" style="left:585.3px;top:206.26px;font-size:14.7px;line-height:14.7px;color:#56789e;white-space:nowrap;letter-spacing:.2px">Top 10 Clientes</div>
<div class="abs" style="left:1488.2px;top:227px;width:1.2px;height:553.5px;background:#9dbdd6"></div>
<div class="abs" style="left:302.8px;top:779.3px;width:1187px;height:1.3px;background:#94b7d2"></div>
<div class="abs" style="left:307.5px;top:233px;width:1176px;height:71.5px;border:1.5px solid #a9c5dc;border-radius:6px;background:#e3eaf2;box-shadow:inset 1px 1px 0 #eef3f8"></div>
<div class="abs" style="left:318px;top:244.56px;font-size:14.7px;line-height:14.7px;color:#4f6f96;white-space:nowrap;">Período:</div>
<div class="abs" style="left:319px;top:263.6px;width:114.5px;height:24.9px;border:1px solid #a5c1d8;background:#fff"></div>
<div class="abs" style="left:414px;top:265px;width:18.5px;height:22.5px;background:linear-gradient(#e6eff6,#c3d8e8);border-left:1px solid #b5cde0"></div>
<svg class="abs" style="left:418px;top:268px" width="12" height="16" viewBox="0 0 12 16"><path d="M1.6,6 L5.4,2.3 L9.2,6Z M1.6,9.2 L5.4,12.9 L9.2,9.2Z" fill="#2f5c8c"/></svg>
<div class="abs" style="left:320.4px;top:269.00px;font-size:15.0px;line-height:15.0px;color:#0b0b10;white-space:nowrap;letter-spacing:.21px;">07/10/2024</div>
<div class="abs" style="left:440.5px;top:268.86px;font-size:14.7px;line-height:14.7px;color:#4f6f96;white-space:nowrap;">à</div>
<div class="abs" style="left:453px;top:263.6px;width:114.5px;height:24.9px;border:1px solid #a5c1d8;background:#fff"></div>
<div class="abs" style="left:548px;top:265px;width:18.5px;height:22.5px;background:linear-gradient(#e6eff6,#c3d8e8);border-left:1px solid #b5cde0"></div>
<svg class="abs" style="left:552px;top:268px" width="12" height="16" viewBox="0 0 12 16"><path d="M1.6,6 L5.4,2.3 L9.2,6Z M1.6,9.2 L5.4,12.9 L9.2,9.2Z" fill="#2f5c8c"/></svg>
<div class="abs" style="left:454.4px;top:269.00px;font-size:15.0px;line-height:15.0px;color:#0b0b10;white-space:nowrap;letter-spacing:.21px;-webkit-text-stroke:.45px #0b0b10;">07/10/2025</div>
<div class="abs" style="left:582px;top:255px;width:137px;height:38px;border:1px solid #7fa5c8;border-radius:5px;background:linear-gradient(#d9e8f2 0%,#cee0ed 40%,#c1d8e9 70%,#b8d2e5 100%);box-shadow:inset 0 0 0 1px rgba(255,255,255,.35)"></div>
<div class="abs" style="left:727.2px;top:255px;width:137.8px;height:38px;border:1px solid #7fa5c8;border-radius:5px;background:linear-gradient(#d9e8f2 0%,#cee0ed 40%,#c1d8e9 70%,#b8d2e5 100%);box-shadow:inset 0 0 0 1px rgba(255,255,255,.35)"></div>
<div class="abs" style="left:654.4px;top:267.76px;font-size:14.7px;line-height:14.7px;color:#15151f;white-space:nowrap;letter-spacing:-.3px">Exibir</div>
<div class="abs" style="left:784.9px;top:267.76px;font-size:14.7px;line-height:14.7px;color:#15151f;white-space:nowrap;letter-spacing:.46px">Imprimir</div>
<svg class="abs" style="left:611px;top:255px" width="38" height="38" viewBox="0 0 38 38">
<defs><linearGradient id="ring" x1="0" y1="0" x2="0.6" y2="1"><stop offset="0" stop-color="#ffffff"/><stop offset=".45" stop-color="#e9e9e9"/><stop offset=".8" stop-color="#bdbdbd"/><stop offset="1" stop-color="#d8d8d8"/></linearGradient>
<radialGradient id="grn" cx="50%" cy="30%" r="75%"><stop offset="0" stop-color="#62c25a"/><stop offset=".55" stop-color="#3cae38"/><stop offset="1" stop-color="#56cf4e"/></radialGradient>
<filter id="b3"><feGaussianBlur stdDeviation=".35"/></filter></defs>
<g filter="url(#b3)">
<circle cx="19" cy="18.8" r="16.3" fill="url(#ring)" stroke="#747474" stroke-width="1.3"/>
<circle cx="19" cy="18.8" r="12.9" fill="#4d6a4a"/>
<circle cx="19" cy="18.8" r="12.2" fill="url(#grn)"/>
<path d="M12.2,23.4 A8.5,8.5 0 1 1 26.6,22.6 Q25.2,25.6 21.5,27.2" fill="none" stroke="#e6efe4" stroke-width="3" stroke-linecap="round" opacity=".93"/>
<path d="M15.2,26.4 L21.8,22.6 L22.6,29.8Z" fill="#cfd8cd" opacity=".95"/>
<ellipse cx="19" cy="16.6" rx="5.6" ry="3.2" fill="#fff" opacity=".18"/>
</g></svg>
<svg class="abs" style="left:751px;top:259px" width="32" height="32" viewBox="0 0 32 32">
<defs><linearGradient id="doc" x1="0" y1="0" x2="1" y2="1"><stop offset="0" stop-color="#ffffff"/><stop offset=".35" stop-color="#f4f8fd"/><stop offset=".7" stop-color="#b4d6f1"/><stop offset="1" stop-color="#96c8ee"/></linearGradient>
<radialGradient id="lens" cx="55%" cy="60%" r="65%"><stop offset="0" stop-color="#ffffff"/><stop offset=".6" stop-color="#d6f2fb"/><stop offset="1" stop-color="#a9d4f4"/></radialGradient>
<filter id="b4"><feGaussianBlur stdDeviation=".3"/></filter></defs>
<g filter="url(#b4)">
<path d="M4.6,3.3 L20.3,3.3 L26.4,9 L26.4,29.2 L4.6,29.2Z" fill="url(#doc)" stroke="#8f9bd9" stroke-width="1.2"/>
<path d="M20.3,3.3 L20.3,9 L26.4,9Z" fill="#62b4f2" stroke="#8f9bd9" stroke-width=".8"/>
<path d="M10.6,20.9 L4.2,26.6" stroke="#f5a02a" stroke-width="3.1" stroke-linecap="round"/>
<circle cx="15.5" cy="16.2" r="6" fill="url(#lens)" stroke="#8b8cc9" stroke-width="1.2"/>
</g></svg>
<div class="abs" style="left:306px;top:306px;width:1182px;height:471.6px;background:#e1e8f0;border-style:solid;border-color:#c6cace #eff3f7 #eff3f7 #c6cace;border-width:1.2px 4.5px 4.5px 2px"></div>
<svg class="abs" style="left:0;top:0" width="1789" height="930" viewBox="0 0 1789 930"><text x="740.2" y="339.6" transform="scale(1,1.05)" font-family="DejaVu Sans,Liberation Sans,sans-serif" font-weight="bold" font-size="36.35" fill="#3a6186">Top 10 Produtos</text><rect x="537.0" y="400.5" width="913.0" height="1.4" fill="#c9cccf"/><rect x="537.0" y="435.5" width="913.0" height="1.4" fill="#c9cccf"/><rect x="537.0" y="470.5" width="913.0" height="1.4" fill="#c9cccf"/><rect x="537.0" y="505.5" width="913.0" height="1.4" fill="#c9cccf"/><rect x="537.0" y="540.5" width="913.0" height="1.4" fill="#c9cccf"/><rect x="537.0" y="575.5" width="913.0" height="1.4" fill="#c9cccf"/><rect x="537.0" y="610.5" width="913.0" height="1.4" fill="#c9cccf"/><rect x="537.0" y="645.5" width="913.0" height="1.4" fill="#c9cccf"/><rect x="537.0" y="680.5" width="913.0" height="1.4" fill="#c9cccf"/><rect x="537.0" y="715.5" width="913.0" height="1.4" fill="#c9cccf"/><rect x="530.8" y="383.00" width="3.6" height="1.3" fill="#b3b7bb"/><rect x="530.8" y="391.75" width="3.6" height="1.3" fill="#b3b7bb"/><rect x="528.8" y="400.50" width="5.6" height="1.3" fill="#9fa3a7"/><rect x="530.8" y="409.25" width="3.6" height="1.3" fill="#b3b7bb"/><rect x="530.8" y="418.00" width="3.6" height="1.3" fill="#b3b7bb"/><rect x="530.8" y="426.75" width="3.6" height="1.3" fill="#b3b7bb"/><rect x="528.8" y="435.50" width="5.6" height="1.3" fill="#9fa3a7"/><rect x="530.8" y="444.25" width="3.6" height="1.3" fill="#b3b7bb"/><rect x="530.8" y="453.00" width="3.6" height="1.3" fill="#b3b7bb"/><rect x="530.8" y="461.75" width="3.6" height="1.3" fill="#b3b7bb"/><rect x="528.8" y="470.50" width="5.6" height="1.3" fill="#9fa3a7"/><rect x="530.8" y="479.25" width="3.6" height="1.3" fill="#b3b7bb"/><rect x="530.8" y="488.00" width="3.6" height="1.3" fill="#b3b7bb"/><rect x="530.8" y="496.75" width="3.6" height="1.3" fill="#b3b7bb"/><rect x="528.8" y="505.50" width="5.6" height="1.3" fill="#9fa3a7"/><rect x="530.8" y="514.25" width="3.6" height="1.3" fill="#b3b7bb"/><rect x="530.8" y="523.00" width="3.6" height="1.3" fill="#b3b7bb"/><rect x="530.8" y="531.75" width="3.6" height="1.3" fill="#b3b7bb"/><rect x="528.8" y="540.50" width="5.6" height="1.3" fill="#9fa3a7"/><rect x="530.8" y="549.25" width="3.6" height="1.3" fill="#b3b7bb"/><rect x="530.8" y="558.00" width="3.6" height="1.3" fill="#b3b7bb"/><rect x="530.8" y="566.75" width="3.6" height="1.3" fill="#b3b7bb"/><rect x="528.8" y="575.50" width="5.6" height="1.3" fill="#9fa3a7"/><rect x="530.8" y="584.25" width="3.6" height="1.3" fill="#b3b7bb"/><rect x="530.8" y="593.00" width="3.6" height="1.3" fill="#b3b7bb"/><rect x="530.8" y="601.75" width="3.6" height="1.3" fill="#b3b7bb"/><rect x="528.8" y="610.50" width="5.6" height="1.3" fill="#9fa3a7"/><rect x="530.8" y="619.25" width="3.6" height="1.3" fill="#b3b7bb"/><rect x="530.8" y="628.00" width="3.6" height="1.3" fill="#b3b7bb"/><rect x="530.8" y="636.75" width="3.6" height="1.3" fill="#b3b7bb"/><rect x="528.8" y="645.50" width="5.6" height="1.3" fill="#9fa3a7"/><rect x="530.8" y="654.25" width="3.6" height="1.3" fill="#b3b7bb"/><rect x="530.8" y="663.00" width="3.6" height="1.3" fill="#b3b7bb"/><rect x="530.8" y="671.75" width="3.6" height="1.3" fill="#b3b7bb"/><rect x="528.8" y="680.50" width="5.6" height="1.3" fill="#9fa3a7"/><rect x="530.8" y="689.25" width="3.6" height="1.3" fill="#b3b7bb"/><rect x="530.8" y="698.00" width="3.6" height="1.3" fill="#b3b7bb"/><rect x="530.8" y="706.75" width="3.6" height="1.3" fill="#b3b7bb"/><rect x="528.8" y="715.50" width="5.6" height="1.3" fill="#9fa3a7"/><rect x="530.8" y="724.25" width="3.6" height="1.3" fill="#b3b7bb"/><rect x="530.8" y="733.00" width="3.6" height="1.3" fill="#b3b7bb"/><rect x="535" y="377.4" width="916.8" height="2.1" fill="#6a6a6a"/><rect x="1449.8" y="377.4" width="2.1" height="364" fill="#727272"/><rect x="534.2" y="377.4" width="2.8" height="364" fill="#000"/><rect x="534.3" y="739" width="917.5" height="2.5" fill="#000"/><rect x="537.0" y="389.59999999999997" width="769.0" height="23" fill="#4466a3"/><rect x="1309.0" y="399.9" width="18.5" height="2.5" fill="#fbfcfd"/><rect x="1327.7" y="391.2" width="147.6" height="23.3" rx="3.4" fill="#fff" stroke="#6f8eb0" stroke-width="1.4"/><text x="1406.1" y="409.0" text-anchor="middle" textLength="118.2" lengthAdjust="spacingAndGlyphs" font-family="DejaVu Sans,Liberation Sans,sans-serif" font-weight="bold" font-size="14.3" fill="#335a82">R$ 141.145,93</text><text x="527.9" y="405.09999999999997" text-anchor="end" textLength="80.3" lengthAdjust="spacingAndGlyphs" font-family="Liberation Sans,sans-serif" font-size="12.6" fill="#161616" stroke="#161616" stroke-width=".22">PAO FRANCES</text><rect x="537.0" y="424.59999999999997" width="299.4" height="23" fill="#f39c35"/><rect x="839.4" y="434.9" width="18.5" height="2.5" fill="#fbfcfd"/><rect x="858.1" y="426.2" width="137.6" height="23.3" rx="3.4" fill="#fff" stroke="#6f8eb0" stroke-width="1.4"/><text x="930.1" y="444.0" text-anchor="middle" textLength="107.3" lengthAdjust="spacingAndGlyphs" font-family="DejaVu Sans,Liberation Sans,sans-serif" font-weight="bold" font-size="14.3" fill="#335a82">R$ 54.960,41</text><text x="527.9" y="440.09999999999997" text-anchor="end" textLength="122.4" lengthAdjust="spacingAndGlyphs" font-family="Liberation Sans,sans-serif" font-size="12.6" fill="#161616" stroke="#161616" stroke-width=".22">PÃO DE QUEIJO MINI</text><rect x="537.0" y="459.59999999999997" width="278.6" height="23" fill="#f14c14"/><rect x="818.6" y="469.9" width="18.5" height="2.5" fill="#fbfcfd"/><rect x="837.3" y="461.2" width="137.6" height="23.3" rx="3.4" fill="#fff" stroke="#6f8eb0" stroke-width="1.4"/><text x="909.3" y="479.0" text-anchor="middle" textLength="107.3" lengthAdjust="spacingAndGlyphs" font-family="DejaVu Sans,Liberation Sans,sans-serif" font-weight="bold" font-size="14.3" fill="#335a82">R$ 51.131,47</text><text x="527.9" y="475.09999999999997" text-anchor="end" textLength="91.8" lengthAdjust="spacingAndGlyphs" font-family="Liberation Sans,sans-serif" font-size="12.6" fill="#161616" stroke="#161616" stroke-width=".22">CAFE COLONIAL</text><rect x="537.0" y="494.59999999999997" width="260.8" height="23" fill="#4e97a8"/><rect x="800.8" y="504.9" width="18.5" height="2.5" fill="#fbfcfd"/><rect x="819.5" y="496.2" width="137.6" height="23.3" rx="3.4" fill="#fff" stroke="#6f8eb0" stroke-width="1.4"/><text x="891.5" y="514.0" text-anchor="middle" textLength="107.3" lengthAdjust="spacingAndGlyphs" font-family="DejaVu Sans,Liberation Sans,sans-serif" font-weight="bold" font-size="14.3" fill="#335a82">R$ 47.871,70</text><text x="527.9" y="510.09999999999997" text-anchor="end" textLength="165.6" lengthAdjust="spacingAndGlyphs" font-family="Liberation Sans,sans-serif" font-size="12.6" fill="#161616" stroke="#161616" stroke-width=".22">SELF SERVICE SEM BALANÇA</text><rect x="537.0" y="529.6" width="170.9" height="23" fill="#2b406b"/><rect x="710.9" y="539.9000000000001" width="18.5" height="2.5" fill="#fbfcfd"/><rect x="729.6" y="531.2" width="137.6" height="23.3" rx="3.4" fill="#fff" stroke="#6f8eb0" stroke-width="1.4"/><text x="801.6" y="549.0" text-anchor="middle" textLength="107.3" lengthAdjust="spacingAndGlyphs" font-family="DejaVu Sans,Liberation Sans,sans-serif" font-weight="bold" font-size="14.3" fill="#335a82">R$ 31.376,31</text><text x="527.9" y="545.1" text-anchor="end" textLength="71.6" lengthAdjust="spacingAndGlyphs" font-family="Liberation Sans,sans-serif" font-size="12.6" fill="#161616" stroke="#161616" stroke-width=".22">PIZZA FATIA</text><rect x="537.0" y="564.6" width="123.2" height="23" fill="#1d7b63"/><rect x="663.2" y="574.9000000000001" width="18.5" height="2.5" fill="#fbfcfd"/><rect x="681.9" y="566.2" width="137.6" height="23.3" rx="3.4" fill="#fff" stroke="#6f8eb0" stroke-width="1.4"/><text x="753.9" y="584.0" text-anchor="middle" textLength="107.3" lengthAdjust="spacingAndGlyphs" font-family="DejaVu Sans,Liberation Sans,sans-serif" font-weight="bold" font-size="14.3" fill="#335a82">R$ 22.608,32</text><text x="527.9" y="580.1" text-anchor="end" textLength="60" lengthAdjust="spacingAndGlyphs" font-family="Liberation Sans,sans-serif" font-size="12.6" fill="#161616" stroke="#161616" stroke-width=".22">PÃO DOCE</text><rect x="537.0" y="599.6" width="108.6" height="23" fill="#b3080e"/><rect x="648.6" y="609.9000000000001" width="18.5" height="2.5" fill="#fbfcfd"/><rect x="667.3" y="601.2" width="137.6" height="23.3" rx="3.4" fill="#fff" stroke="#6f8eb0" stroke-width="1.4"/><text x="739.3" y="619.0" text-anchor="middle" textLength="107.3" lengthAdjust="spacingAndGlyphs" font-family="DejaVu Sans,Liberation Sans,sans-serif" font-weight="bold" font-size="14.3" fill="#335a82">R$ 19.934,20</text><text x="527.9" y="615.1" text-anchor="end" textLength="113.3" lengthAdjust="spacingAndGlyphs" font-family="Liberation Sans,sans-serif" font-size="12.6" fill="#161616" stroke="#161616" stroke-width=".22">MARMITEX GRANDE</text><rect x="537.0" y="634.6" width="86.2" height="23" fill="#f2c05d"/><rect x="626.2" y="644.9000000000001" width="18.5" height="2.5" fill="#fbfcfd"/><rect x="644.9" y="636.2" width="137.6" height="23.3" rx="3.4" fill="#fff" stroke="#6f8eb0" stroke-width="1.4"/><text x="716.9" y="654.0" text-anchor="middle" textLength="107.3" lengthAdjust="spacingAndGlyphs" font-family="DejaVu Sans,Liberation Sans,sans-serif" font-weight="bold" font-size="14.3" fill="#335a82">R$ 15.822,76</text><text x="527.9" y="650.1" text-anchor="end" textLength="69.3" lengthAdjust="spacingAndGlyphs" font-family="Liberation Sans,sans-serif" font-size="12.6" fill="#161616" stroke="#161616" stroke-width=".22">MUSSARELA</text><rect x="537.0" y="669.6" width="86.1" height="23" fill="#5db79e"/><rect x="626.1" y="679.9000000000001" width="18.5" height="2.5" fill="#fbfcfd"/><rect x="644.8" y="671.2" width="137.6" height="23.3" rx="3.4" fill="#fff" stroke="#6f8eb0" stroke-width="1.4"/><text x="716.8" y="689.0" text-anchor="middle" textLength="107.3" lengthAdjust="spacingAndGlyphs" font-family="DejaVu Sans,Liberation Sans,sans-serif" font-weight="bold" font-size="14.3" fill="#335a82">R$ 15.801,26</text><text x="527.9" y="685.1" text-anchor="end" textLength="180" lengthAdjust="spacingAndGlyphs" font-family="Liberation Sans,sans-serif" font-size="12.6" fill="#161616" stroke="#161616" stroke-width=".22">QUINTA PROMOÇAO PIZZA FAT</text><rect x="537.0" y="704.6" width="80.1" height="23" fill="#707070"/><rect x="620.1" y="714.9000000000001" width="18.5" height="2.5" fill="#fbfcfd"/><rect x="638.8" y="706.2" width="137.6" height="23.3" rx="3.4" fill="#fff" stroke="#6f8eb0" stroke-width="1.4"/><text x="710.8" y="724.0" text-anchor="middle" textLength="107.3" lengthAdjust="spacingAndGlyphs" font-family="DejaVu Sans,Liberation Sans,sans-serif" font-weight="bold" font-size="14.3" fill="#335a82">R$ 14.706,00</text><text x="527.9" y="720.1" text-anchor="end" textLength="89.4" lengthAdjust="spacingAndGlyphs" font-family="Liberation Sans,sans-serif" font-size="12.6" fill="#161616" stroke="#161616" stroke-width=".22">BRAHMA 473ML</text></svg>
</body>
</html>
